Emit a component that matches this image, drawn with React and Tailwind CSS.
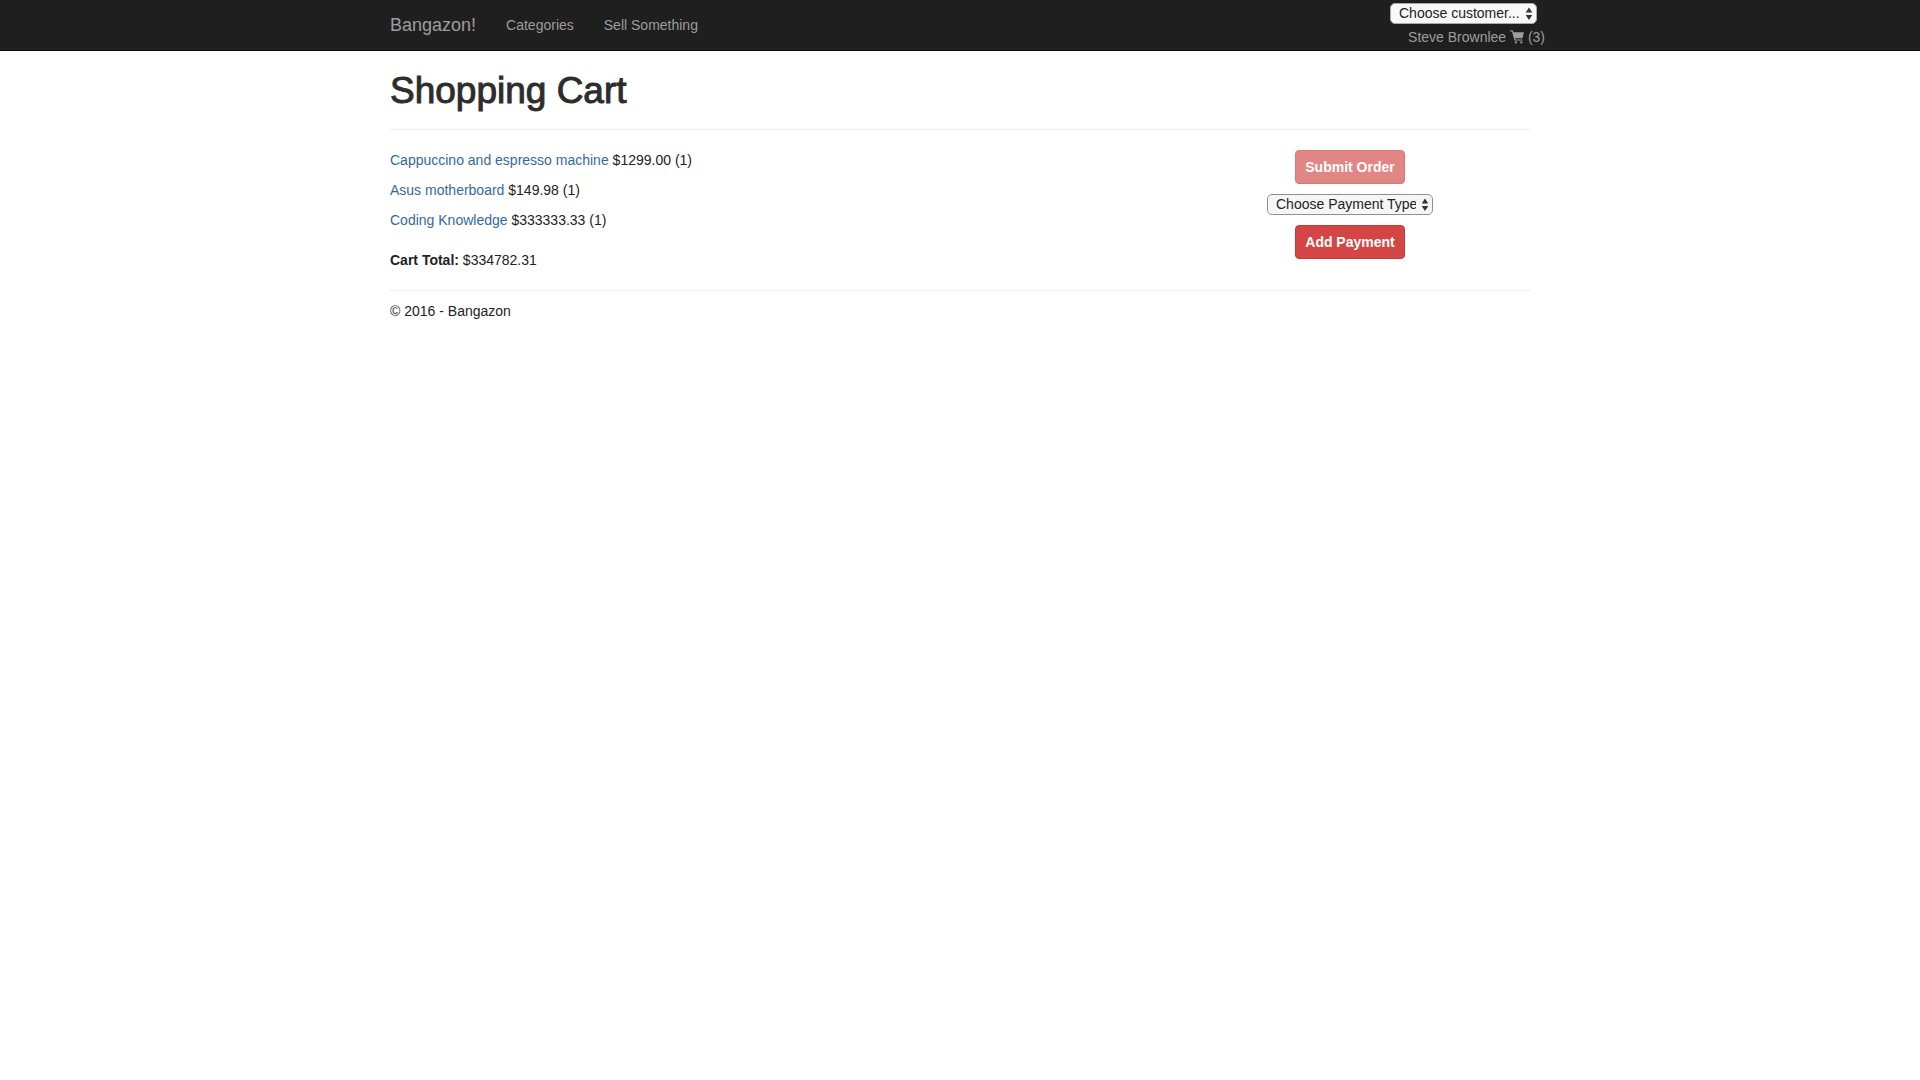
import React from "react";

const items = [
  { name: "Cappuccino and espresso machine", price: "$1299.00", count: 1 },
  { name: "Asus motherboard", price: "$149.98", count: 1 },
  { name: "Coding Knowledge", price: "$333333.33", count: 1 },
];

function CartIcon() {
  return (
    <svg viewBox="0 0 14 14" className="inline-block h-3.5 w-3.5 align-[-2px]" fill="currentColor" aria-hidden="true">
      <path d="M0 .9Q0 .3.6.3H2.4Q2.9.3 3 .8L3.4 2.3H13.3Q14 2.3 13.8 3L12.6 7.7Q12.5 8.2 12 8.2H5.1L5.4 9.5H12.1Q12.7 9.5 12.7 10T12.1 10.6H4.9Q4.4 10.6 4.3 10.1L2 1.5H.6Q0 1.5 0 .9Z" />
      <circle cx="5.8" cy="12.4" r="1.1" />
      <circle cx="11.3" cy="12.4" r="1.1" />
    </svg>
  );
}

function Picker({ label, width, tone }) {
  return (
    <span className="relative inline-block align-top">
      <select
        aria-label={label}
        className={`block h-[21px] appearance-none rounded-[5px] border pb-0.5 pl-2 pr-4 text-sm leading-4 text-[#222] ${width} ${tone}`}
      >
        <option>{label}</option>
      </select>
      <svg viewBox="0 0 8 14" className="pointer-events-none absolute right-1 top-1 h-3.5 w-2" fill="#333" aria-hidden="true">
        <path d="M4 .5 7.3 5.6H.7ZM4 13 .7 8H7.3Z" />
      </svg>
    </span>
  );
}

export default function App() {
  return (
    <div className="min-h-screen bg-white font-['Liberation_Sans',Arial,sans-serif] text-sm leading-5 text-[#222]">
      <nav className="border-b border-[#080808] bg-[#1f1f1f] text-[#9d9d9d]">
        <div className="mx-auto flex h-[50px] max-w-[1170px] justify-between pl-[15px]">
          <div className="flex items-center">
            <a href="#" className="pr-[15px] text-lg leading-5">Bangazon!</a>
            <a href="#" className="px-[15px]">Categories</a>
            <a href="#" className="px-[15px]">Sell Something</a>
          </div>
          <div className="flex flex-col items-end pt-[3px]">
            <div className="pr-2">
              <Picker label="Choose customer..." width="w-[147px]" tone="border-[#aaa] bg-[#f8f8f8]" />
            </div>
            <a href="#" className="mt-[3px]">
              Steve Brownlee <CartIcon /> (3)
            </a>
          </div>
        </div>
      </nav>

      <div className="mx-auto max-w-[1170px] px-[15px]">
        <main>
          <h1 className="pt-5 text-[37px] leading-10 font-normal text-[#2d2d2d] [-webkit-text-stroke:1px_#2d2d2d]">Shopping Cart</h1>
          <hr className="mt-[18px] mb-5 border-[#eee]" />
          <div className="-mx-[15px] grid grid-cols-3">
            <div className="col-span-2 px-[15px]">
              <ul className="space-y-2.5">
                {items.map((item) => (
                  <li key={item.name}>
                    <a href="#" className="text-[#3568a4]">{item.name}</a> {item.price} ({item.count})
                  </li>
                ))}
              </ul>
              <p className="mt-5">
                <b>Cart Total:</b> $334782.31
              </p>
            </div>
            <div className="flex flex-col items-center gap-2.5 px-[15px]">
              <button disabled className="h-[34px] w-[110px] rounded border border-[#c9302c] bg-[#d34645] font-bold text-white opacity-65">
                Submit Order
              </button>
              <Picker label="Choose Payment Type" width="w-[166px]" tone="border-[#8f8f8f] bg-[#f6f6f6]" />
              <button className="h-[34px] w-[110px] rounded border border-[#bd3c39] bg-[#d34645] font-bold text-white">
                Add Payment
              </button>
            </div>
          </div>
        </main>
        <hr className="mt-5 mb-2.5 border-[#eee]" />
        <footer>
          <p>© 2016 - Bangazon</p>
        </footer>
      </div>
    </div>
  );
}
